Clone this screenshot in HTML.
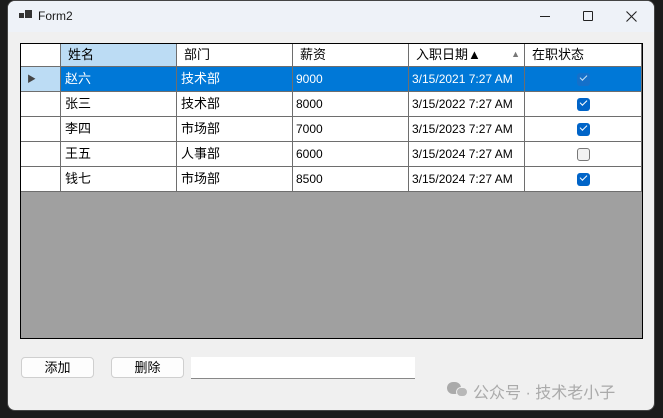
<!DOCTYPE html>
<html><head><meta charset="utf-8"><style>
*{margin:0;padding:0;box-sizing:border-box}
body{width:663px;height:418px;background:#1b1b1b;position:relative;overflow:hidden;font-family:"Liberation Sans","Noto Sans CJK SC",sans-serif;font-size:13px;color:#000}
.win{position:absolute;left:7px;top:0;width:648px;height:411px;background:#f0f0f0;border-radius:8px;overflow:hidden;border:1px solid #444}
.title{position:absolute;left:0;top:0;width:100%;height:31px;background:#eef2f8}
.a{position:absolute}
.grid{position:absolute;left:12px;top:42px;width:623px;height:296px;background:#a0a0a0;border:1px solid #000}
.c{position:absolute;height:25px;line-height:24px;border-right:1px solid #6e6e6e;border-bottom:1px solid #6e6e6e;background:#fff;white-space:nowrap;padding-left:4px;font-size:13px}
.n{font-size:12px;padding-left:3px}
.sel{background:#0078d7;color:#fff}
.cb{position:absolute;width:13px;height:13px;border-radius:3px;background:#0064c8;left:52px;top:6px}
.cb:after{content:"";position:absolute;left:3px;top:2px;width:6px;height:3px;border-left:1.3px solid #fff;border-bottom:1.3px solid #fff;transform:rotate(-45deg)}
.un{background:#f2f2f2;border:1px solid #777}
.un:after{display:none}
.btn{position:absolute;top:356px;width:73px;height:21px;background:#fdfdfd;border:1px solid #cfcfcf;border-radius:4px;text-align:center;line-height:19px;font-size:13px}
</style></head><body>
<div class="win">
<div class="title"></div>
<div class="a" style="left:11px;top:12px;width:5px;height:5px;background:#333"></div>
<div class="a" style="left:17px;top:9px;width:7px;height:8px;background:#333"></div>
<div class="a" style="left:30px;top:8px;font-size:12px;color:#1a1a1a">Form2</div>
<div class="a" style="left:532px;top:15px;width:10px;height:1px;background:#222"></div>
<div class="a" style="left:575px;top:10px;width:10px;height:10px;border:1px solid #222;border-radius:1px"></div>
<svg class="a" style="left:618px;top:10px" width="11" height="11"><path d="M0.5 0.5L10.5 10.5M10.5 0.5L0.5 10.5" stroke="#222" stroke-width="1.1"/></svg>

<div class="grid" id="g"></div>

<div class="btn" style="left:13px">添加</div>
<div class="btn" style="left:103px">删除</div>
<div class="a" style="left:183px;top:356px;width:224px;height:22px;background:#fff;border-bottom:1px solid #888"></div>
<div class="a" style="left:439px;top:381px;width:14px;height:12px;border-radius:7px;background:#aaa"></div>
<div class="a" style="left:448px;top:386px;width:12px;height:10px;border-radius:6px;background:#b8b8b8;border:1px solid #f0f0f0"></div>
<div class="a" style="left:465px;top:378px;font-size:16px;color:#aaa">公众号 · 技术老小子</div>
</div>
<script>
var g=document.getElementById('g');
var xs=[0,40,156,272,388,504,621];
var hd=['','姓名','部门','薪资','入职日期▲','在职状态'];
var rows=[['赵六','技术部','9000','3/15/2021 7:27 AM',1],['张三','技术部','8000','3/15/2022 7:27 AM',1],['李四','市场部','7000','3/15/2023 7:27 AM',1],['王五','人事部','6000','3/15/2024 7:27 AM',0],['钱七','市场部','8500','3/15/2024 7:27 AM',1]];
var h='';
for(var i=0;i<6;i++){var st='left:'+xs[i]+'px;top:0;width:'+(xs[i+1]-xs[i])+'px;height:23px;line-height:21px;';
if(i==1)st+='background:#bcdcf4;padding-left:7px;';else if(i>1)st+='padding-left:7px;';
var t=hd[i];if(i==4)t='入职日期▲<span style="position:absolute;right:4px;top:0;color:#777;font-size:9px">▲</span>';
h+='<div class="c" style="'+st+'">'+t+'</div>';}
for(var r=0;r<5;r++){var y=23+r*25;for(var i=0;i<6;i++){var st='left:'+xs[i]+'px;top:'+y+'px;width:'+(xs[i+1]-xs[i])+'px;';var cls='c';var t='';
if(i==0){if(r==0){st+='background:#bcdcf4;';t='<span style="position:absolute;left:6px;top:0;font-size:9px;color:#444">▶</span>';}}
else if(i<5){t=rows[r][i-1];if(i>=3)cls+=' n';if(r==0)cls+=' sel';}
else{if(r==0)cls+=' sel';t='<div class="cb'+(rows[r][4]?'':' un')+'"'+(r==0?' style="background:#1a6fc8;opacity:.8"':'')+'></div>';}
h+='<div class="'+cls+'" style="'+st+'">'+t+'</div>';}}
g.innerHTML=h;
</script>
</body></html>
